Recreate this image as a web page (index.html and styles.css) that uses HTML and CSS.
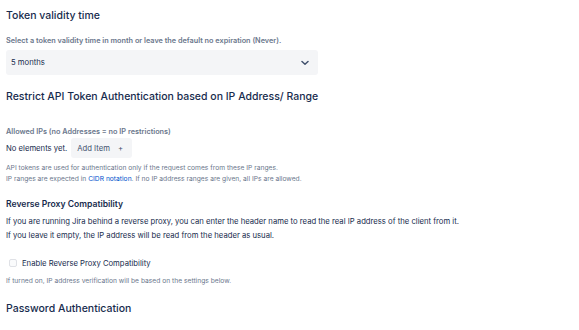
FILE: index.html
```html
<!DOCTYPE html>
<html lang="en">
<head>
  <meta charset="UTF-8" />
  <title>API Token Settings</title>
  <link rel="stylesheet" href="styles.css">
</head>
<body>
  <div class="page">
    <h3 class="section-title first">Token validity time</h3>
    <div class="field">
      <label class="field-label">Select a token validity time in month or leave the default no expiration (Never).</label>
      <div class="select">
        <span>5 months</span>
        <svg class="chevron" width="8" height="6" viewBox="0 0 8 6"><path d="M1 1.5 L4 4.3 L7 1.5" fill="none" stroke="#42526E" stroke-width="1.5" stroke-linecap="round" stroke-linejoin="round"/></svg>
      </div>
    </div>

    <h3 class="section-title">Restrict API Token Authentication based on IP Address/ Range</h3>
    <div class="field wide">
      <label class="field-label">Allowed IPs (no Addresses = no IP restrictions)</label>
      <div class="list-row">
        <span>No elements yet.</span>
        <button class="add-btn">Add Item <span class="plus">+</span></button>
      </div>
      <p class="help">API tokens are used for authentication only if the request comes from these IP ranges.<br>
      IP ranges are expected in <a href="#">CIDR notation</a>. If no IP address ranges are given, all IPs are allowed.</p>
    </div>

    <h4 class="sub-title">Reverse Proxy Compatibility</h4>
    <p class="text">If you are running Jira behind a reverse proxy, you can enter the header name to read the real IP address of the client from it.<br>
    If you leave it empty, the IP address will be read from the header as usual.</p>

    <label class="check">
      <span class="box"></span>
      <span>Enable Reverse Proxy Compatibility</span>
    </label>
    <p class="help">If turned on, IP address verification will be based on the settings below.</p>

    <h3 class="section-title">Password Authentication</h3>
  </div>
</body>
</html>
```

FILE: styles.css
```css
body {
  margin: 0;
  font-family: Inter, 'Noto Sans', sans-serif;
  color: #172B4D;
  background: #fff;
}

.page {
  padding: 0 6px;
}

.section-title {
  font-size: 10.5px;
  font-weight: 500;
  line-height: 14px;
  margin: 15px 0 0;
}

.section-title.first {
  margin-top: 9px;
}

.field {
  margin-top: 13px;
}

.field.wide {
  margin-top: 23px;
}

.field-label {
  display: block;
  font-size: 7.3px;
  font-weight: 600;
  color: #6B778C;
  line-height: 10px;
}

.select {
  width: 312px;
  height: 25px;
  margin-top: 4px;
  background: #F4F5F7;
  border-radius: 3px;
  display: flex;
  align-items: center;
  justify-content: space-between;
  padding: 0 9px 0 5px;
  box-sizing: border-box;
  font-size: 7.7px;
}

.list-row {
  display: flex;
  align-items: center;
  gap: 4px;
  margin-top: 1px;
  font-size: 7.7px;
}

.add-btn {
  font-family: inherit;
  font-size: 7.7px;
  color: #42526E;
  background: #F4F5F7;
  border: none;
  border-radius: 3px;
  height: 20px;
  padding: 0 9px 0 6px;
}

.add-btn .plus {
  margin-left: 6px;
}

.help {
  font-size: 6.7px;
  line-height: 10.5px;
  color: #6B778C;
  margin: 5px 0 0;
}

.help a {
  color: #0052CC;
  text-decoration: none;
}

.sub-title {
  font-size: 8.6px;
  font-weight: 600;
  line-height: 12px;
  margin: 14px 0 0;
}

.text {
  font-size: 7.7px;
  line-height: 14px;
  margin: 5px 0 0;
}

.check {
  display: flex;
  align-items: center;
  gap: 5px;
  height: 10px;
  margin-top: 15px;
  padding-left: 3px;
  font-size: 7.7px;
}

.check .box {
  width: 6px;
  height: 6px;
  border: 1px solid #DFE1E6;
  border-radius: 2px;
  background: #FAFBFC;
}

.check + .help {
  margin-top: 8px;
}
```
